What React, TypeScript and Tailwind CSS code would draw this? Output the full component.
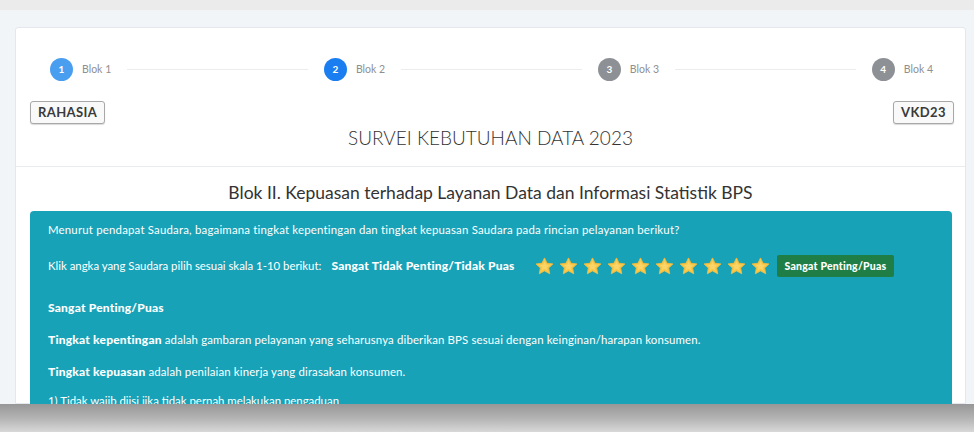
import React from "react";

const steps = [
  { n: 1, label: "Blok 1", color: "bg-[#4a9ef0]" },
  { n: 2, label: "Blok 2", color: "bg-[#1b7ef0]" },
  { n: 3, label: "Blok 3", color: "bg-[#8d9095]" },
  { n: 4, label: "Blok 4", color: "bg-[#8d9095]" },
];

function Star() {
  return (
    <svg width="21" height="21" viewBox="0 0 24 24" aria-hidden="true">
      <path
        d="M12 2.2l2.9 6.1 6.7.8-4.9 4.6 1.3 6.6L12 17l-6 3.3 1.3-6.6-4.9-4.6 6.7-.8z"
        fill="#f8c84a"
        stroke="#f3b93a"
        strokeWidth="1"
        strokeLinejoin="round"
      />
      <path d="M12 6.5l1.6 3.4 3.6.4-2.7 2.5.7 3.6L12 14.6l-3.2 1.8.7-3.6-2.7-2.5 3.6-.4z" fill="#fbd567" />
    </svg>
  );
}

function Stepper() {
  return (
    <div className="flex items-center pt-[30px] pl-[34px] pr-[32px]">
      {steps.map((s, i) => (
        <React.Fragment key={s.n}>
          <div className="flex items-center gap-[9px]">
            <div
              className={`${s.color} w-[23px] h-[23px] rounded-full flex items-center justify-center text-white text-[10px] font-bold`}
            >
              {s.n}
            </div>
            <span className="text-[10.5px] text-[#8f8f8f]">{s.label}</span>
          </div>
          {i < steps.length - 1 && <div className="flex-1 h-px bg-[#ececec] mx-[16px]" />}
        </React.Fragment>
      ))}
    </div>
  );
}

function Badge({ children }: { children: React.ReactNode }) {
  return (
    <div className="h-[23px] px-[7px] flex items-center rounded-[3px] border border-[#a8a8a8] bg-[#f9f9f9] shadow-[0_1px_1px_rgba(0,0,0,0.15)] text-[13px] tracking-[0.4px] font-bold text-[#3a3a3a]">
      {children}
    </div>
  );
}

export default function App() {
  return (
    <div
      className="w-[974px] h-[432px] flex flex-col overflow-hidden bg-[#f2f5f8]"
      style={{ fontFamily: "Lato, 'Open Sans', sans-serif" }}
    >
      <div className="h-[10px] bg-[#ebebeb] shrink-0" />
      <div className="h-[394px] shrink-0 overflow-hidden pl-[15px] pr-[8px] pt-[17px] flex">
        <div className="flex-1 flex flex-col bg-white border border-[#e4e7eb] rounded-t-[3px]">
          <Stepper />
          <div className="flex justify-between pl-[14px] pr-[11px] mt-[20px]">
            <Badge>RAHASIA</Badge>
            <Badge>VKD23</Badge>
          </div>
          <div className="border-b border-[#e9ecef] pb-[16px]">
            <h1 className="mt-[2px] text-center text-[19px] leading-[24px] font-light text-[#333]">
              SURVEI KEBUTUHAN DATA 2023
            </h1>
          </div>
          <h2 className="mt-[15px] text-center text-[17.5px] leading-[22px] text-[#333]">
            Blok II. Kepuasan terhadap Layanan Data dan Informasi Statistik BPS
          </h2>
          <div className="mt-[7px] ml-[14px] mr-[13px] flex-1 bg-[#17a2b8] rounded-t-[4px] pt-[11px] px-[18px] text-white text-[11.4px] leading-[16px]">
            <p className="tracking-[0.2px]">
              Menurut pendapat Saudara, bagaimana tingkat kepentingan dan tingkat kepuasan Saudara pada rincian
              pelayanan berikut?
            </p>
            <div className="mt-[17px] flex items-center h-[22px]">
              <span>Klik angka yang Saudara pilih sesuai skala 1-10 berikut:</span>
              <span className="ml-[10px] font-black text-[12px] tracking-[0.2px]">Sangat Tidak Penting/Tidak Puas</span>
              <div className="ml-[19px] flex items-center gap-[3px]">
                {Array.from({ length: 10 }).map((_, i) => (
                  <Star key={i} />
                ))}
              </div>
              <span className="ml-[6px] h-[22px] px-[8px] flex items-center bg-[#1e7e45] rounded-[2px] font-black text-[10.5px] tracking-[0.2px]">
                Sangat Penting/Puas
              </span>
            </div>
            <p className="mt-[23px] font-black text-[12px] tracking-[0.2px]">Sangat Penting/Puas</p>
            <p className="mt-[16px] tracking-[0.15px]">
              <span className="font-black text-[12px] tracking-[0.2px]">Tingkat kepentingan</span> adalah gambaran
              pelayanan yang seharusnya diberikan BPS sesuai dengan keinginan/harapan konsumen.
            </p>
            <p className="mt-[16px] tracking-[0.15px]">
              <span className="font-black text-[12px] tracking-[0.2px]">Tingkat kepuasan</span> adalah penilaian
              kinerja yang dirasakan konsumen.
            </p>
            <p className="mt-[13px]">1) Tidak wajib diisi jika tidak pernah melakukan pengaduan</p>
          </div>
        </div>
      </div>
      <div className="h-[28px] shrink-0 bg-linear-to-b from-[#979797] via-[#b3b3b3] to-[#d8d8d8]" />
    </div>
  );
}
